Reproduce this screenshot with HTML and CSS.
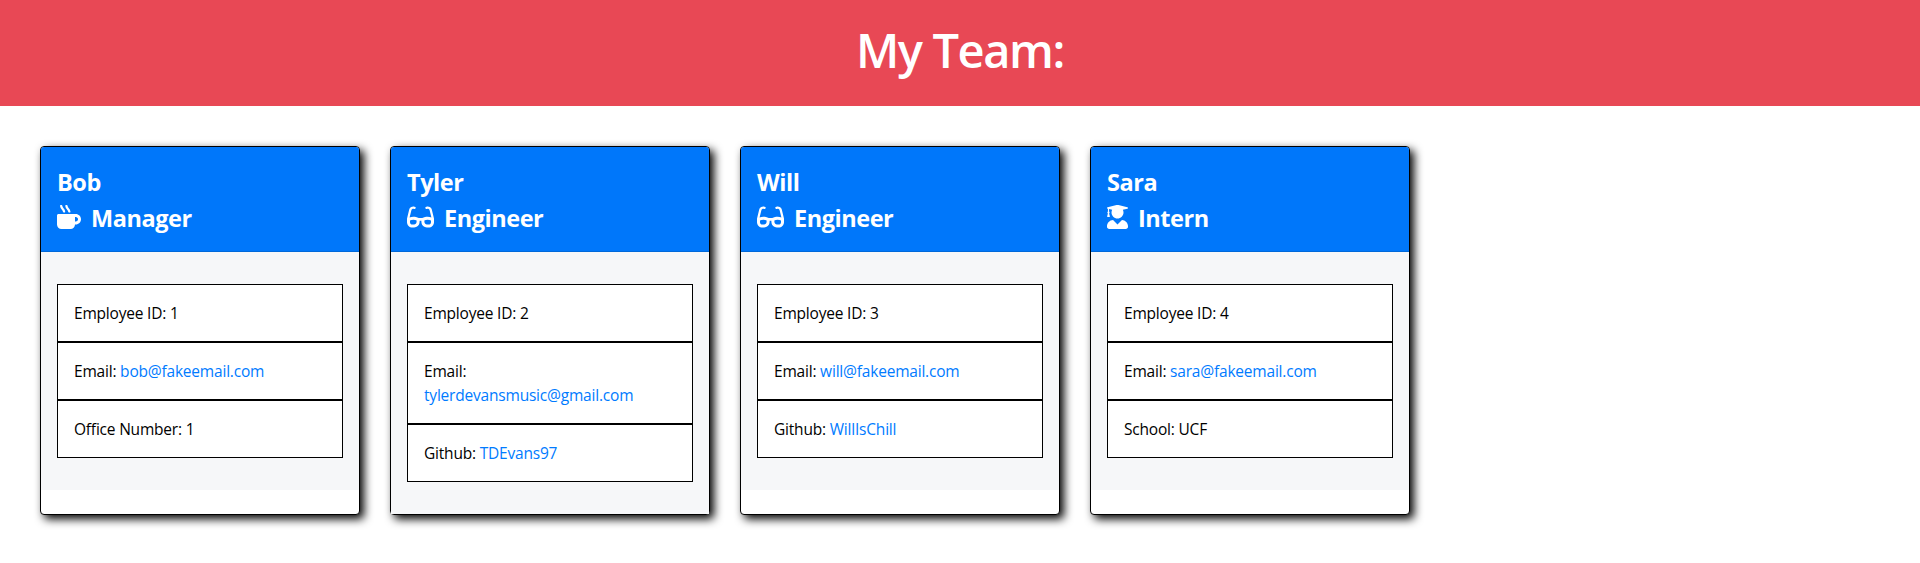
FILE: index.html
```html
<!DOCTYPE html>
<html lang="en">
<head>
<meta charset="utf-8">
<title>My Team</title>
<link rel="stylesheet" href="styles.css">
</head>
<body>
<svg class="sprite" aria-hidden="true">
  <symbol id="mug" viewBox="0 0 512 512"><path d="M127.1 146.5c1.3 7.7 8 13.5 16 13.5h16.5c9.8 0 17.6-8.5 16.3-18-3.8-28.2-16.4-54.2-36.6-74.7-14.4-14.7-23.6-33.3-26.4-53.5C111.8 5.9 105 0 96.8 0H80.4C70.6 0 63 8.5 64.1 18c3.9 31.9 18 61.3 40.6 84.4 12 12.2 19.7 27.5 22.4 44.1zm112 0c1.3 7.7 8 13.5 16 13.5h16.5c9.8 0 17.6-8.5 16.3-18-3.8-28.2-16.4-54.2-36.6-74.7-14.4-14.7-23.6-33.3-26.4-53.5C223.8 5.9 217 0 208.8 0h-16.4c-9.8 0-17.5 8.5-16.3 18 3.9 31.9 18 61.3 40.6 84.4 12 12.2 19.7 27.5 22.4 44.1zM400 192H32c-17.7 0-32 14.3-32 32v192c0 53 43 96 96 96h192c53 0 96-43 96-96h16c61.8 0 112-50.2 112-112s-50.2-112-112-112zm0 160h-16v-96h16c26.5 0 48 21.5 48 48s-21.5 48-48 48z"/></symbol>
  <symbol id="glasses" viewBox="0 0 576 512"><path d="M574.1 280.37L528.75 98.66c-5.91-23.7-21.59-44.05-43-55.81-21.44-11.73-46.97-14.11-70.19-6.33l-15.25 5.08c-8.39 2.79-12.92 11.86-10.12 20.24l5.06 15.18c2.79 8.38 11.85 12.91 20.23 10.12l13.18-4.39c10.87-3.62 23-3.57 33.16 1.73 10.29 5.37 17.57 14.56 20.37 25.82l38.46 153.82c-22.19-6.81-49.79-12.46-81.2-12.46-34.77 0-73.98 7.02-114.85 26.74h-73.18c-40.87-19.74-80.08-26.75-114.86-26.75-31.42 0-59.02 5.65-81.21 12.46l38.46-153.83c2.79-11.25 10.09-20.45 20.38-25.81 10.16-5.3 22.28-5.35 33.15-1.73l13.17 4.39c8.38 2.79 17.44-1.74 20.23-10.12l5.06-15.18c2.8-8.38-1.73-17.45-10.12-20.24l-15.25-5.08c-23.22-7.78-48.75-5.41-70.19 6.33-21.41 11.77-37.09 32.11-43 55.8L1.9 280.37A64.218 64.218 0 0 0 0 295.86v70.25C0 429.01 51.58 480 115.2 480h37.12c60.28 0 110.37-45.94 114.88-105.37l2.93-38.63h35.75l2.93 38.63C313.31 434.06 363.4 480 423.68 480h37.12c63.62 0 115.2-50.99 115.2-113.88v-70.25c0-5.23-.64-10.43-1.9-15.5zm-370.72 89.42c-1.97 25.91-24.4 46.21-51.06 46.21H115.2C86.97 416 64 393.62 64 366.11v-37.54c18.12-6.49 43.42-12.92 72.58-12.92 23.86 0 47.26 4.33 69.93 12.92l-3.13 41.22zM512 366.12c0 27.51-22.97 49.88-51.2 49.88h-37.12c-26.67 0-49.1-20.3-51.06-46.21l-3.13-41.22c22.67-8.59 46.08-12.92 69.95-12.92 29.12 0 54.43 6.44 72.55 12.93v37.54z"/></symbol>
  <symbol id="graduate" viewBox="0 0 448 512"><path d="M319.4 320.6L224 416l-95.4-95.4C57.1 323.7 0 382.2 0 454.4v9.6c0 26.5 21.5 48 48 48h352c26.5 0 48-21.5 48-48v-9.6c0-72.2-57.1-130.7-128.6-133.8zM13.6 79.8l6.4 1.5v58.4c-7 4.2-12 11.5-12 20.3 0 8.4 4.6 15.4 11.1 19.7L3.5 242c-1.7 6.9 2.1 14 7.6 14h41.8c5.5 0 9.3-7.1 7.6-14l-15.6-62.3C51.4 175.4 56 168.4 56 160c0-8.8-5-16.1-12-20.3V87.1l66 15.9c-8.6 17.2-14 36.4-14 57 0 70.7 57.3 128 128 128s128-57.3 128-128c0-20.6-5.3-39.8-14-57l96.3-23.2c18.2-4.4 18.2-27.1 0-31.5l-190.4-46c-13-3.1-26.7-3.1-39.7 0L13.6 48.2c-18.1 4.4-18.1 27.2 0 31.6z"/></symbol>
</svg>
<header class="banner"><h1>My Team:</h1></header>
<main class="team">
  <article class="card">
    <div class="card-header">
      <h2 class="name">Bob</h2>
      <h3 class="role"><svg class="icon"><use href="#mug"/></svg><span>Manager</span></h3>
    </div>
    <div class="card-body">
      <ul class="details">
        <li>Employee ID: 1</li>
        <li>Email: <a href="mailto:bob@fakeemail.com">bob@fakeemail.com</a></li>
        <li>Office Number: 1</li>
      </ul>
    </div>
  </article>
  <article class="card">
    <div class="card-header">
      <h2 class="name">Tyler</h2>
      <h3 class="role"><svg class="icon icon-wide"><use href="#glasses"/></svg><span>Engineer</span></h3>
    </div>
    <div class="card-body">
      <ul class="details">
        <li>Employee ID: 2</li>
        <li>Email: <a href="mailto:tylerdevansmusic@gmail.com">tylerdevansmusic@gmail.com</a></li>
        <li>Github: <a href="#">TDEvans97</a></li>
      </ul>
    </div>
  </article>
  <article class="card">
    <div class="card-header">
      <h2 class="name">Will</h2>
      <h3 class="role"><svg class="icon icon-wide"><use href="#glasses"/></svg><span>Engineer</span></h3>
    </div>
    <div class="card-body">
      <ul class="details">
        <li>Employee ID: 3</li>
        <li>Email: <a href="mailto:will@fakeemail.com">will@fakeemail.com</a></li>
        <li>Github: <a href="#">WillIsChill</a></li>
      </ul>
    </div>
  </article>
  <article class="card">
    <div class="card-header">
      <h2 class="name">Sara</h2>
      <h3 class="role"><svg class="icon icon-narrow"><use href="#graduate"/></svg><span>Intern</span></h3>
    </div>
    <div class="card-body">
      <ul class="details">
        <li>Employee ID: 4</li>
        <li>Email: <a href="mailto:sara@fakeemail.com">sara@fakeemail.com</a></li>
        <li>School: UCF</li>
      </ul>
    </div>
  </article>
</main>
</body>
</html>
```
FILE: styles.css
```css
* { box-sizing: border-box; }
body {
  margin: 0;
  background: #fff;
  color: #000;
  font: 400 15.5px/24px "Open Sans", "Noto Sans", sans-serif;
  letter-spacing: -0.2px;
}
h1, h2, h3, ul { margin: 0; padding: 0; }
.sprite { display: none; }
.banner {
  padding: 22px 24px 26px;
  background: #e84855;
  color: #fff;
  text-align: center;
}
.banner h1 {
  font-size: 47px;
  font-weight: 600;
  line-height: 57.6px;
  letter-spacing: -1.4px;
}
.team {
  display: flex;
  gap: 30px;
  padding: 40px;
}
.card {
  width: 320px;
  border: 1px solid #000;
  border-radius: 4px;
  background: #fff;
  box-shadow: 4px 4px 10px #000;
}
.card-header {
  padding: 16px;
  border-bottom: 1px solid rgba(0, 0, 0, .125);
  border-radius: 3px 3px 0 0;
  background: #0077fa;
  color: #fff;
}
.name, .role {
  font-size: 23.5px;
  font-weight: 700;
  line-height: 36px;
  letter-spacing: -0.45px;
}
.name, .role span { transform: translateY(1px); }
.role {
  display: flex;
  align-items: center;
  gap: 10px;
}
.icon {
  width: 24px;
  height: 24px;
  fill: currentColor;
}
.icon-wide { width: 27px; }
.icon-narrow { width: 21px; }
.card-body {
  padding: 32px 16px;
  background: #f6f7f9;
}
.details { list-style: none; }
.details li {
  padding: 16px;
  border: 1px solid #000;
  background: #fff;
}
.details a {
  color: #007bff;
  text-decoration: none;
}
```
